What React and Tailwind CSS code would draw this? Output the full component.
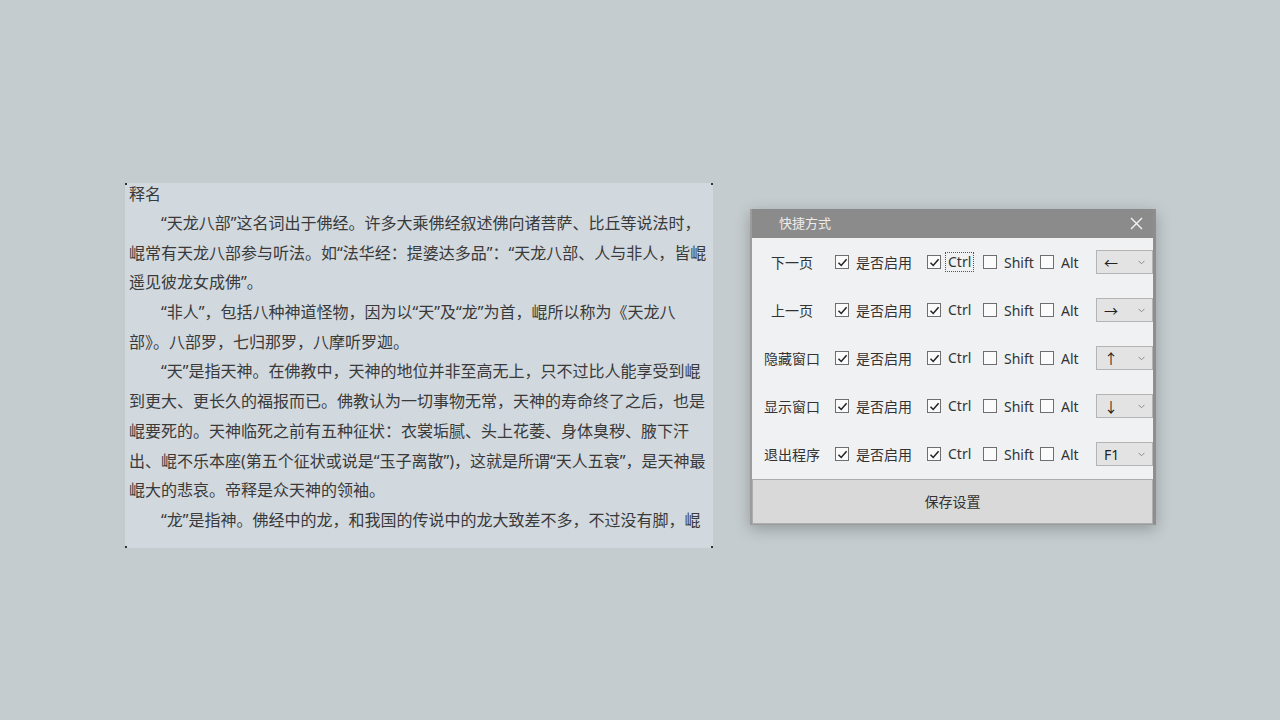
import React from "react";

const FONT = { fontFamily: '"Noto Sans", "Noto Sans CJK SC", "Noto Sans CJK TC", "Noto Sans CJK JP", sans-serif' };

const lines = [
  { t: "“天龙八部”这名词出于佛经。许多大乘佛经叙述佛向诸菩萨、比丘等说法时，", indent: true },
  { t: "崐常有天龙八部参与听法。如“法华经：提婆达多品”：“天龙八部、人与非人，皆崐", indent: false },
  { t: "遥见彼龙女成佛”。", indent: false },
  { t: "“非人”，包括八种神道怪物，因为以“天”及“龙”为首，崐所以称为《天龙八", indent: true },
  { t: "部》。八部罗，七归那罗，八摩听罗迦。", indent: false },
  { t: "“天”是指天神。在佛教中，天神的地位并非至高无上，只不过比人能享受到崐", indent: true },
  { t: "到更大、更长久的福报而已。佛教认为一切事物无常，天神的寿命终了之后，也是", indent: false },
  { t: "崐要死的。天神临死之前有五种征状：衣裳垢腻、头上花萎、身体臭秽、腋下汗", indent: false },
  { t: "出、崐不乐本座(第五个征状或说是“玉子离散”)，这就是所谓“天人五衰”，是天神最", indent: false },
  { t: "崐大的悲哀。帝释是众天神的领袖。", indent: false },
  { t: "“龙”是指神。佛经中的龙，和我国的传说中的龙大致差不多，不过没有脚，崐", indent: true },
];

function Check({ checked }) {
  return (
    <span className="w-[14px] h-[14px] border border-[#6f6f6f] bg-[#fbfbfb] flex items-center justify-center shrink-0">
      {checked && (
        <svg width="11" height="11" viewBox="0 0 11 11">
          <path d="M1.5 5.8 L4.2 8.5 L9.6 2.2" fill="none" stroke="#222" strokeWidth="1.5" />
        </svg>
      )}
    </span>
  );
}

function Row({ label, keyText, focus }) {
  return (
    <div className="h-[48px] flex items-center text-[14px] text-[#333]">
      <div className="w-[80px] text-center">{label}</div>
      <div className="w-[92px] ml-[3px] flex items-center">
        <Check checked />
        <span className="ml-[7px]">是否启用</span>
      </div>
      <div className="w-[56px] flex items-center">
        <Check checked />
        <span className={"ml-[4px] px-[2px] leading-[18px] " + (focus ? "border border-dotted border-[#555]" : "border border-transparent")}>Ctrl</span>
      </div>
      <div className="w-[57px] flex items-center">
        <Check />
        <span className="ml-[7px]">Shift</span>
      </div>
      <div className="w-[56px] flex items-center">
        <Check />
        <span className="ml-[7px]">Alt</span>
      </div>
      <div className="w-[57px] h-[24px] border border-[#b4b4b4] bg-[#e3e3e3] flex items-center justify-between pl-[7px] pr-[7px]">
        <span className="text-[14px] text-[#222]">{keyText}</span>
        <svg width="7" height="5" viewBox="0 0 7 5">
          <path d="M0.5 0.8 L3.5 3.8 L6.5 0.8" fill="none" stroke="#8a8a8a" strokeWidth="1" />
        </svg>
      </div>
    </div>
  );
}

export default function App() {
  return (
    <div className="w-[1280px] h-[720px] bg-[#c5cccf] flex items-start overflow-hidden" style={FONT}>
      <div className="relative ml-[123px] mt-[183px] w-[590px] h-[365px] bg-[#d1d8de] border-l-[2px] border-[#c2c9cf] overflow-hidden">
        <div className="pl-[4px] text-[16px] text-[#3a3a3a]">
          <div className="h-[22px] leading-[22px] mb-[4px] whitespace-nowrap">释名</div>
          {lines.map((l, i) => (
            <div key={i} className={"h-[29.7px] leading-[29.7px] whitespace-nowrap " + (l.indent ? "pl-[32px]" : "")}>
              {l.t}
            </div>
          ))}
        </div>
        <span className="absolute left-0 top-0 w-[2px] h-[2px] bg-[#333]" />
        <span className="absolute right-0 top-0 w-[2px] h-[2px] bg-[#333]" />
        <span className="absolute left-0 bottom-0 w-[2px] h-[2px] bg-[#333]" />
        <span className="absolute right-0 bottom-0 w-[2px] h-[2px] bg-[#333]" />
      </div>

      <div className="ml-[37px] mt-[209px] w-[406px] h-[316px] bg-[#f0f1f3] border-l-[2px] border-r-[3px] border-b-[1px] border-[#9c9c9c] border-r-[#8e8e8e] shadow-[0_4px_14px_rgba(0,0,0,0.25)] flex flex-col">
        <div className="h-[29px] bg-[#8b8b8b] flex items-center justify-between pl-[27px] pr-[10px]">
          <span className="text-[13px] text-[#ececec]">快捷方式</span>
          <svg width="13" height="13" viewBox="0 0 13 13">
            <path d="M1 1 L12 12 M12 1 L1 12" stroke="#f4f4f4" strokeWidth="1.4" />
          </svg>
        </div>
        <div className="flex flex-col">
          <Row label="下一页" keyText="←" focus />
          <Row label="上一页" keyText="→" />
          <Row label="隐藏窗口" keyText="↑" />
          <Row label="显示窗口" keyText="↓" />
          <Row label="退出程序" keyText="F1" />
        </div>
        <div className="mt-[1px] flex-1 border border-[#adadad] bg-[#d9d9d9] flex items-center justify-center text-[14px] text-[#333]">
          保存设置
        </div>
      </div>
    </div>
  );
}
